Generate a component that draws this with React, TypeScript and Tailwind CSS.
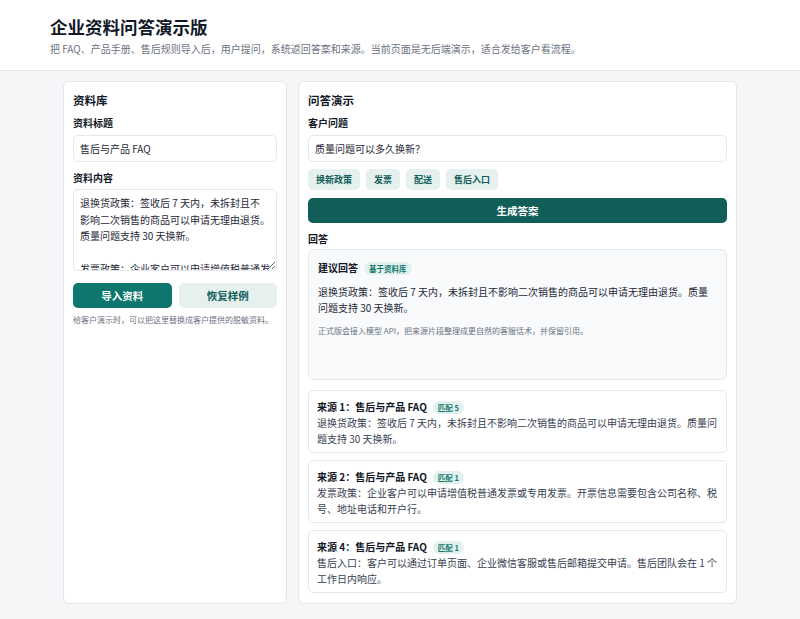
import React, { useState } from "react";

const sampleDoc = `退换货政策：签收后 7 天内，未拆封且不影响二次销售的商品可以申请无理由退货。质量问题支持 30 天换新。

发票政策：企业客户可以申请增值税普通发票或专用发票。开票信息需要包含公司名称、税号、地址电话和开户行。

配送说明：订单付款后 48 小时内发货，偏远地区可能延迟 1 到 3 天。

售后入口：客户可以通过订单页面、企业微信客服或售后邮箱提交申请。售后团队会在 1 个工作日内响应。`;

const chips = ["换新政策", "发票", "配送", "售后入口"];

const sources = [
	{
		id: 1,
		score: 5,
		text: "退换货政策：签收后 7 天内，未拆封且不影响二次销售的商品可以申请无理由退货。质量问题支持 30 天换新。",
	},
	{
		id: 2,
		score: 1,
		text: "发票政策：企业客户可以申请增值税普通发票或专用发票。开票信息需要包含公司名称、税号、地址电话和开户行。",
	},
	{
		id: 4,
		score: 1,
		text: "售后入口：客户可以通过订单页面、企业微信客服或售后邮箱提交申请。售后团队会在 1 个工作日内响应。",
	},
];

const SourceCard = ({ id, score, text }: { id: number; score: number; text: string }) => (
	<div className="rounded-[5px] border border-[#e5e7eb] bg-white px-[8px] pt-[8px] pb-[5px]">
		<div className="flex items-center gap-[6px] leading-[16px]">
			<span className="text-[10px] font-bold text-[#111827]">来源 {id}：售后与产品 FAQ</span>
			<span className="rounded-full bg-[#e3f1ee] px-[5px] text-[7.5px] leading-[13px] font-bold text-[#0f766e]">
				匹配 {score}
			</span>
		</div>
		<p className="text-[10px] leading-[16px] text-[#374151]">{text}</p>
	</div>
);

export default function App() {
	const [title, setTitle] = useState("售后与产品 FAQ");
	const [doc, setDoc] = useState(sampleDoc);
	const [question, setQuestion] = useState("质量问题可以多久换新？");

	return (
		<div className="min-h-[619px] bg-[#f5f6f8] font-['Noto_Sans_CJK_SC','Noto_Sans',sans-serif] text-[#1f2937]">
			<header className="border-b border-[#e5e7eb] bg-white px-[50px] pt-[15px] pb-[14px]">
				<h1 className="text-[17.5px] leading-[24px] font-bold text-[#111827]">企业资料问答演示版</h1>
				<p className="mt-[3px] text-[10px] leading-[14px] text-[#6b7280]">
					把 FAQ、产品手册、售后规则导入后，用户提问，系统返回答案和来源。当前页面是无后端演示，适合发给客户看流程。
				</p>
			</header>

			<main className="mx-auto grid w-[674px] grid-cols-[224px_1fr] gap-[11px] pt-[10px] pb-[14px]">
				{/* 资料库 */}
				<section className="rounded-[6px] border border-[#e5e7eb] bg-white px-[9px] pt-[9px] pb-[10px]">
					<h2 className="text-[11.5px] leading-[18px] font-bold text-[#111827]">资料库</h2>
					<label className="mt-[6px] block text-[10px] leading-[16px] font-bold text-[#111827]">资料标题</label>
					<input
						value={title}
						onChange={(e) => setTitle(e.target.value)}
						className="mt-[4px] h-[27px] w-full rounded-[5px] border border-[#e5e7eb] px-[6px] text-[10px] text-[#1f2937] outline-none"
					/>
					<label className="mt-[8px] block text-[10px] leading-[16px] font-bold text-[#111827]">资料内容</label>
					<textarea
						value={doc}
						onChange={(e) => setDoc(e.target.value)}
						className="mt-[3px] block h-[82px] w-full resize-y rounded-[5px] border border-[#e5e7eb] px-[6px] pt-[5px] text-[10px] leading-[16.5px] text-[#1f2937] outline-none [scrollbar-width:none]"
					/>
					<div className="mt-[12px] grid grid-cols-2 gap-[7px]">
						<button className="h-[25px] rounded-[5px] bg-[#0f766e] text-[10.5px] font-bold text-white">导入资料</button>
						<button className="h-[25px] rounded-[5px] bg-[#e6f1ef] text-[10.5px] font-bold text-[#115e59]">恢复样例</button>
					</div>
					<p className="mt-[6px] text-[8px] leading-[12px] text-[#6b7280]">
						给客户演示时，可以把这里替换成客户提供的脱敏资料。
					</p>
				</section>

				{/* 问答演示 */}
				<section className="rounded-[6px] border border-[#e5e7eb] bg-white px-[9px] pt-[9px] pb-[10px]">
					<h2 className="text-[11.5px] leading-[18px] font-bold text-[#111827]">问答演示</h2>
					<label className="mt-[6px] block text-[10px] leading-[16px] font-bold text-[#111827]">客户问题</label>
					<input
						value={question}
						onChange={(e) => setQuestion(e.target.value)}
						className="mt-[4px] h-[27px] w-full rounded-[5px] border border-[#e5e7eb] px-[6px] text-[10px] text-[#1f2937] outline-none"
					/>
					<div className="mt-[7px] flex gap-[6px]">
						{chips.map((c) => (
							<button
								key={c}
								className="h-[21px] rounded-[5px] bg-[#e6f1ef] px-[8px] text-[9px] font-bold text-[#115e59]"
							>
								{c}
							</button>
						))}
					</div>
					<button className="mt-[8px] h-[25px] w-full rounded-[5px] bg-[#115e59] text-[10.5px] font-bold text-white">
						生成答案
					</button>
					<h3 className="mt-[8px] text-[10px] leading-[16px] font-bold text-[#111827]">回答</h3>

					<div className="mt-[2px] h-[131px] rounded-[6px] border border-[#e2e8f0] bg-[#f8fafc] px-[9px] pt-[10px]">
						<div className="flex items-center gap-[6px] leading-[16px]">
							<span className="text-[10px] font-bold text-[#111827]">建议回答</span>
							<span className="rounded-full bg-[#e3f1ee] px-[5px] text-[7.5px] leading-[13px] font-bold text-[#0f766e]">
								基于资料库
							</span>
						</div>
						<p className="mt-[8px] text-[10px] leading-[16px] text-[#1f2937]">
							退换货政策：签收后 7 天内，未拆封且不影响二次销售的商品可以申请无理由退货。质量问题支持 30 天换新。
						</p>
						<p className="mt-[9px] text-[8px] leading-[12px] text-[#6b7280]">
							正式版会接入模型 API，把来源片段整理成更自然的客服话术，并保留引用。
						</p>
					</div>

					<div className="mt-[10px] flex flex-col gap-[7px]">
						{sources.map((s) => (
							<SourceCard key={s.id} {...s} />
						))}
					</div>
				</section>
			</main>
		</div>
	);
}
